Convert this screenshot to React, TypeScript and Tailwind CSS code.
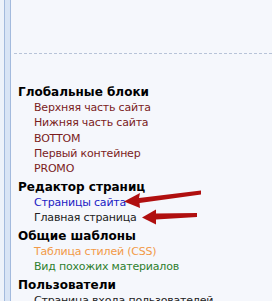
const groups = [
  {
    title: 'Глобальные блоки',
    items: [
      { label: 'Верхняя часть сайта', color: 'text-[#7b1c1c]' },
      { label: 'Нижняя часть сайта', color: 'text-[#7b1c1c]' },
      { label: 'BOTTOM', color: 'text-[#7b1c1c]' },
      { label: 'Первый контейнер', color: 'text-[#7b1c1c]' },
      { label: 'PROMO', color: 'text-[#7b1c1c]' },
    ],
  },
  {
    title: 'Редактор страниц',
    items: [
      { label: 'Страницы сайта', color: 'text-[#1b1bc4]' },
      { label: 'Главная страница', color: 'text-[#222222]' },
    ],
  },
  {
    title: 'Общие шаблоны',
    items: [
      { label: 'Таблица стилей (CSS)', color: 'text-[#f29a48]' },
      { label: 'Вид похожих материалов', color: 'text-[#2f7f2f]' },
    ],
  },
  {
    title: 'Пользователи',
    items: [{ label: 'Страница входа пользователей', color: 'text-[#222222]' }],
  },
];

export default function App() {
  return (
    <div className="relative flex h-[301px] w-[272px] overflow-hidden bg-[#f5f7fc] font-['DejaVu_Sans',sans-serif]">
      {/* left frame edge */}
      <div className="w-[4px] shrink-0 bg-[#edf2fa]" />
      <div className="w-[7px] shrink-0 border-x border-[#a3badd] bg-[#d8e4f5]" />

      <div className="flex-1 pl-[3px]">
        <div className="mt-[53px] border-t border-dashed border-[#b7c3d8]" />

        <div className="pl-[4px] pt-[31px]">
          {groups.map((g, i) => (
            <div key={g.title} className={i > 0 ? 'mt-[3.6px]' : ''}>
              <div className="text-[12px] font-bold leading-[15.2px] text-black">{g.title}</div>
              {g.items.map((it) => (
                <div
                  key={it.label}
                  className={`whitespace-nowrap pl-[16px] text-[11px] leading-[15.2px] tracking-[-0.2px] ${it.color}`}
                >
                  {it.label}
                </div>
              ))}
            </div>
          ))}
        </div>
      </div>

      {/* annotation arrows */}
      <svg className="absolute left-0 top-0" width="272" height="301" viewBox="0 0 272 301">
        <path d="M201 190.5 L139 198 L140 193 L124 201.5 L140 208 L139.5 203 L201 194.5 Z" fill="#b00f0f" />
        <path d="M197 213 L156 213.5 L156 209.5 L142 217.5 L156 224.5 L156 219.5 L197 217 Z" fill="#b00f0f" />
      </svg>
    </div>
  );
}
